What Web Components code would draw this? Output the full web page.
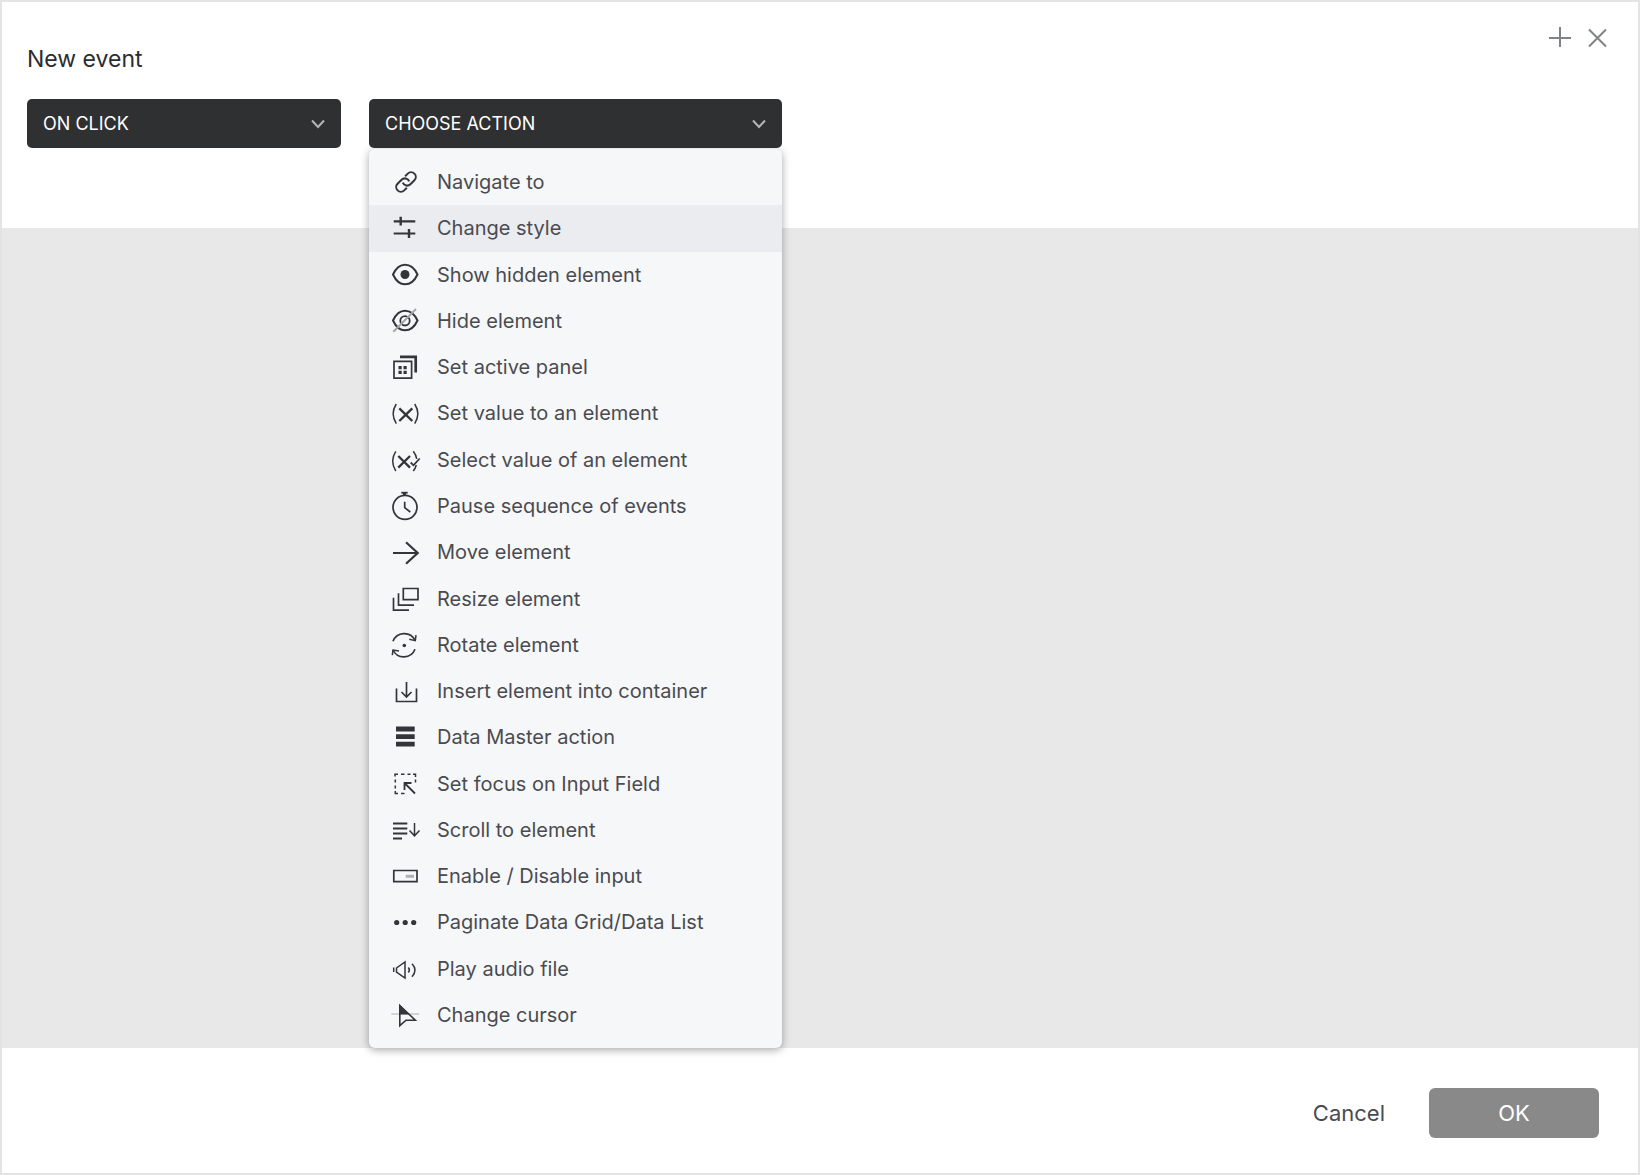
<!DOCTYPE html>
<html lang="en">
<head>
<meta charset="utf-8">
<title>New event</title>
<style>
  body { margin: 0; font-family: Inter, "Liberation Sans", sans-serif; color: #4a4b50; }
</style>
</head>
<body>
<event-dialog>
  <span slot="title">New event</span>
  <event-select slot="fields" class="trigger" label="Trigger" value="ON CLICK" style="flex: 0 0 314px"></event-select>
  <event-select slot="fields" label="Action" value="CHOOSE ACTION" style="flex: 0 0 413px"></event-select>
  <action-menu slot="menu">
    <action-item icon="link">Navigate to</action-item>
    <action-item icon="style" active>Change style</action-item>
    <action-item icon="show">Show hidden element</action-item>
    <action-item icon="hide">Hide element</action-item>
    <action-item icon="panel">Set active panel</action-item>
    <action-item icon="value">Set value to an element</action-item>
    <action-item icon="select">Select value of an element</action-item>
    <action-item icon="pause">Pause sequence of events</action-item>
    <action-item icon="move">Move element</action-item>
    <action-item icon="resize">Resize element</action-item>
    <action-item icon="rotate">Rotate element</action-item>
    <action-item icon="insert">Insert element into container</action-item>
    <action-item icon="data">Data Master action</action-item>
    <action-item icon="focus">Set focus on Input Field</action-item>
    <action-item icon="scroll">Scroll to element</action-item>
    <action-item icon="enable">Enable / Disable input</action-item>
    <action-item icon="paginate">Paginate Data Grid/Data List</action-item>
    <action-item icon="audio">Play audio file</action-item>
    <action-item icon="cursor">Change cursor</action-item>
  </action-menu>
  <dialog-button slot="actions">Cancel</dialog-button>
  <dialog-button slot="actions" primary>OK</dialog-button>
</event-dialog>

<script>
const EYE = '<path d="M4 15.500C7 9 11 5.700 16 5.700S25.500 9 28.500 15.500C25.500 22 21 25.300 16 25.300S7 22 4 15.500Z" stroke-width="2"/>';
const ICONS = {
  link: '<g transform="translate(17 16) rotate(-45)" stroke-width="2"><path d="M-3.500 4.700H-7.200A4.700 4.700 0 0 1 -7.200 -4.700H-1.500A4.700 4.700 0 0 1 2.800 1.800"/><path d="M3.500 -4.700H7.200A4.700 4.700 0 0 1 7.200 4.700H1.500A4.700 4.700 0 0 1 -2.800 -1.800"/></g>',
  style: '<path d="M4.700 9.300H26.300M4.700 21.500H26.300" stroke-width="2.200"/><path d="M11.700 4.700V13.500M20 17V26" stroke-width="2.400"/>',
  show: EYE + '<circle cx="16" cy="15.500" r="4.500" fill="currentColor" stroke="none"/>',
  hide: EYE + '<circle cx="16" cy="15.800" r="4.700" stroke-width="1.800"/><path d="M4.300 26.800L27 4" stroke="#a4a5a8" stroke-width="2"/>',
  panel: '<path d="M5 10.300H22.600V27.200H5Z"/><path d="M11 5.900H26.700V21.500" stroke-width="2.700"/><path d="M9.500 15h3.200v3.200H9.500zM14.500 15h3.200v3.200h-3.200zM9.500 19.700h3.200v3.200H9.500zM14.500 19.700h3.200v3.200h-3.200z" fill="currentColor" stroke="none"/>',
  value: '<path d="M7.300 7Q1 16.800 7.300 26.600M25.700 7Q32 16.800 25.700 26.600" stroke-width="1.500"/><path d="M10.300 11.300L23.300 24M23.300 11.300L10.300 24" stroke-width="2.400"/>',
  select: '<path d="M6.800 7.300Q.500 17 6.800 27M24.300 7.300Q27.200 11 27.700 15M27.300 21Q26.500 24.300 24.300 27" stroke-width="1.500"/><path d="M9.300 12L21 23.600M21 12L9.300 23.600" stroke-width="2.300"/><path d="M21.700 18.500L24.500 21.300L30.700 14.500" stroke-width="1.800"/>',
  pause: '<circle cx="16" cy="17.300" r="12"/><path d="M12.300 2.700H18.700" stroke-width="1.800"/><path d="M15.500 3V6" stroke-width="3"/><path d="M15.700 11.700V17.700L21.300 22"/>',
  move: '<path d="M4 17H29M17 6.300L28.700 17L17 27.700" stroke-width="2.200"/>',
  resize: '<path d="M14.300 5.500H29V16.700H14.300Z"/><path d="M9.500 10.200V22.200H25M4.500 14.800V27.200H20"/>',
  rotate: '<path d="M4 12.300A12 12 0 0 1 26 11.300M4 21A12 12 0 0 0 26 20.300"/><path d="M27 6.200L26.300 11.700L20.300 10.300M3.300 26.200L4 21L10 21.900" stroke-width="1.500"/><circle cx="15.300" cy="16.500" r="1.800" fill="currentColor" stroke="none"/>',
  insert: '<path d="M7.500 13.600V26.500H27.500V13.600M17.500 7V21.900M12.500 17L17.500 22L22.500 17"/>',
  data: '<path d="M7 5.600h18.700v4.800H7zM7 13.200h18.700V18H7zM7 20.700h18.700v4.800H7z" fill="currentColor" stroke="none"/>',
  focus: '<path d="M6 8.500V6.300H9M12 6.300H15.500M18.500 6.300H21.500M24 6.300H26.500V9M26.500 11.500V14.500M6.300 11.500V14.500M6.300 17.500V20.500M6.300 23V25.500H9M12 25.500H15.500" stroke-width="1.500"/><path d="M26 25.500L15.500 15M15.500 22V15H22.500" stroke-width="1.800"/>',
  scroll: '<path d="M4 9.500H18.300M4 14.500H18.300M4 19.500H18.300M4 24.500H13" stroke-width="1.900"/><path d="M25.500 9V21.500M20.500 16.500L25.500 21.800L30.500 16.500" stroke-width="1.500"/>',
  enable: '<path d="M4.800 10.500H28V21.700H4.800Z"/><path d="M16.700 14.800h8.300v3h-8.300z" fill="#b0b1b5" stroke="none"/>',
  paginate: '<g fill="currentColor" stroke="none"><circle cx="7.700" cy="16.500" r="2.600"/><circle cx="16.200" cy="16.500" r="2.600"/><circle cx="24.700" cy="16.500" r="2.600"/></g>',
  audio: '<path d="M4.700 14.500V19M7.500 15L16 9V25L7.500 19Z" stroke-width="1.500"/><path d="M19.300 14.500Q21.500 17 19.300 19.500M23 10.800Q29 17 23 23.800" stroke-width="1.500"/>',
  cursor: '<path d="M2.300 15H30.300" stroke="#c8c9cc" stroke-width="1.500"/><path d="M10.800 6.500L26.300 21.200H17L10.800 26.700Z" stroke-width="1.600"/><path d="M10.300 5.200V15.500H20.500Z" fill="currentColor" stroke="none"/>'
};

class Base extends HTMLElement {
  constructor() { super(); this.attachShadow({ mode: "open" }); }
  connectedCallback() { this.shadowRoot.innerHTML = this.render(); }
}

customElements.define("event-dialog", class extends Base {
  render() {
    return `<style>
      :host { display: flex; flex-direction: column; box-sizing: border-box; min-height: 100vh; border: 2px solid #e4e4e4; background: #fff; }
      main { position: relative; flex: 1; display: flex; flex-direction: column; }
      header { display: flex; justify-content: space-between; align-items: flex-start; padding: 24px 28px 0 25px; }
      h1 { margin: 17px 0 0; font-size: 23px; line-height: 32px; font-weight: 400; color: #2b2c31; }
      nav { display: flex; gap: 14px; }
      nav button { width: 24px; height: 24px; padding: 0; border: 0; background: none; color: #808386; }
      nav svg { display: block; }
      .fields { display: flex; gap: 28px; padding: 24px 25px 80px; }
      .canvas { flex: 1; background: #e8e8e8; }
      .menu { position: absolute; top: 147px; bottom: 0; left: 367px; width: 413px; display: flex; }
      footer { display: flex; justify-content: flex-end; gap: 44px; padding: 40px 39px 35px; }
    </style>
    <main>
      <header>
        <h1><slot name="title"></slot></h1>
        <nav>
          <button aria-label="Add"><svg width="24" height="24" fill="none" stroke="currentColor" stroke-width="2"><path d="M1 12H23M12 1V21"/></svg></button>
          <button aria-label="Close"><svg width="24" height="24" fill="none" stroke="currentColor" stroke-width="2"><path d="M3 3.500L20 20.500M20 3.500L3 20.500"/></svg></button>
        </nav>
      </header>
      <div class="fields"><slot name="fields"></slot></div>
      <div class="canvas"></div>
      <div class="menu"><slot name="menu"></slot></div>
    </main>
    <footer><slot name="actions"></slot></footer>`;
  }
});

customElements.define("event-select", class extends Base {
  render() {
    return `<style>
      :host { display: grid; align-items: center; position: relative; z-index: 1; }
      select, svg { grid-area: 1 / 1; }
      select { appearance: none; width: 100%; height: 49px; padding: 0 44px 0 16px; border: 0; border-radius: 5px; background: #2f3032; color: #fff; font: 400 18px/24px Inter, "Liberation Sans", sans-serif; }
      svg { justify-self: end; margin-right: 16px; pointer-events: none; }
    </style>
    <select aria-label="${this.getAttribute("label")}"><option>${this.getAttribute("value")}</option></select>
    <svg width="14" height="10" fill="none" stroke="#b4b5b6" stroke-width="2"><path d="M1 1.500L7 8L13 1.500"/></svg>`;
  }
});

customElements.define("action-menu", class extends Base {
  render() {
    return `<style>
      :host { flex: 1; display: flex; flex-direction: column; box-sizing: border-box; padding: 10px 0; border-radius: 6px; background: #f6f7f9; box-shadow: 0 2px 8px rgba(0, 0, 0, .35); }
    </style><slot></slot>`;
  }
});

customElements.define("action-item", class extends Base {
  render() {
    return `<style>
      :host { flex: 1; display: flex; }
      :host([active]) { background: #ebecf0; }
      button { flex: 1; display: flex; align-items: center; gap: 16px; padding: 0 20px; border: 0; background: none; color: #4a4b50; font: 400 20px/24px Inter, "Liberation Sans", sans-serif; text-align: left; }
      svg { flex: none; color: #34353a; }
    </style>
    <button><svg width="32" height="32" viewBox="0 0 32 32" fill="none" stroke="currentColor" stroke-width="1.700">${ICONS[this.getAttribute("icon")]}</svg><span><slot></slot></span></button>`;
  }
});

customElements.define("dialog-button", class extends Base {
  render() {
    return `<style>
      :host { display: flex; }
      button { height: 50px; padding: 0; border: 0; border-radius: 6px; background: none; color: #4a4b50; font: 400 22px/28px Inter, "Liberation Sans", sans-serif; }
      :host([primary]) button { width: 170px; background: #898989; color: #fff; }
    </style><button><slot></slot></button>`;
  }
});
</script>
</body>
</html>
